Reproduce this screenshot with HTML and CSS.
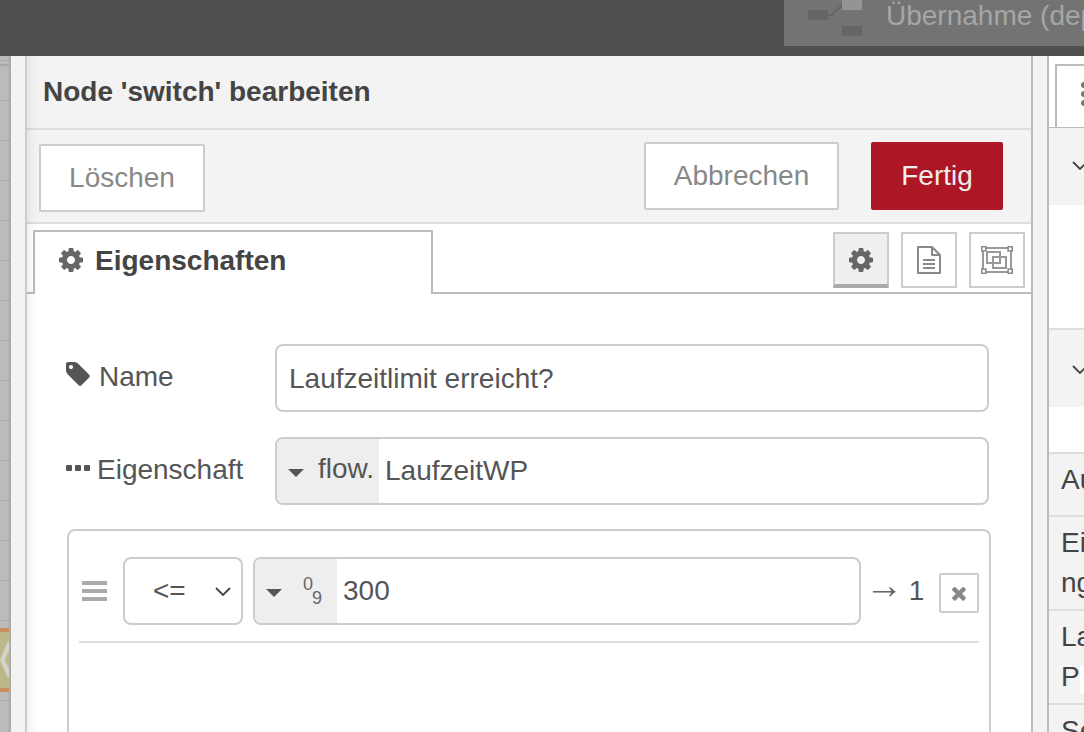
FILE: index.html
```html
<!DOCTYPE html>
<html lang="de">
<head>
<meta charset="utf-8">
<title>Node 'switch' bearbeiten</title>
<link rel="stylesheet" href="styles.css">
</head>
<body>
<header class="topbar">
  <div class="deploy">
    <svg class="deploy-icon" viewBox="0 0 54 36" width="54" height="36"><rect x="0" y="10" width="20" height="10" fill="#666"/><path d="M20 15h4l10-10" fill="none" stroke="#666" stroke-width="2"/><rect x="34" y="0" width="20" height="10" fill="#949494"/><rect x="34" y="26" width="20" height="10" fill="#666"/></svg>
    <span class="deploy-label">Übernahme (dep</span>
  </div>
</header>
<main class="main">
  <div class="canvas">
    <div class="canvas-tabs"></div>
    <div class="canvas-node"><svg viewBox="0 0 9 56" width="9" height="56"><path d="M10 10L2.500 28l7.500 17" fill="none" stroke="#d4d4cc" stroke-width="4.500"/></svg></div>
  </div>
  <div class="strip"></div>
  <section class="tray">
    <div class="tray-title">Node 'switch' bearbeiten</div>
    <div class="toolbar">
      <button class="btn btn-delete">Löschen</button>
      <button class="btn btn-cancel">Abbrechen</button>
      <button class="btn btn-done">Fertig</button>
    </div>
    <div class="tabbar">
      <div class="tab">
        <svg class="tab-gear" viewBox="0 0 1792 1792"><path d="M1152 896q0-106-75-181t-181-75-181 75-75 181 75 181 181 75 181-75 75-181zm512-109v222q0 12-8 23t-20 13l-185 28q-19 54-39 91 35 50 107 138 10 12 10 25t-9 23q-27 37-99 108t-94 71q-12 0-26-9l-138-108q-44 23-91 38-16 136-29 186-7 28-36 28h-222q-14 0-24.500-8.500t-11.500-21.500l-28-184q-49-16-90-37l-141 107q-10 9-25 9-14 0-25-11-126-114-165-168-7-10-7-23 0-12 8-23 15-21 51-66.500t54-70.500q-27-50-41-99l-183-27q-13-2-21-12.500t-8-23.500v-222q0-12 8-23t19-13l186-28q14-46 39-92-40-57-107-138-10-12-10-24 0-10 9-23 26-36 98.500-107.500t94.500-71.500q13 0 26 10l138 107q44-23 91-38 16-136 29-186 7-28 36-28h222q14 0 24.500 8.500t11.500 21.500l28 184q49 16 90 37l142-107q9-9 24-9 13 0 25 10 129 119 165 170 7 8 7 22 0 12-8 23-15 21-51 66.500t-54 70.500q26 50 41 98l183 28q13 2 21 12.500t8 23.500z"/></svg>
        <span class="tab-label">Eigenschaften</span>
      </div>
      <div class="tab-tools">
        <div class="tool tool-active"><svg class="tool-gear" viewBox="0 0 1792 1792"><path d="M1152 896q0-106-75-181t-181-75-181 75-75 181 75 181 181 75 181-75 75-181zm512-109v222q0 12-8 23t-20 13l-185 28q-19 54-39 91 35 50 107 138 10 12 10 25t-9 23q-27 37-99 108t-94 71q-12 0-26-9l-138-108q-44 23-91 38-16 136-29 186-7 28-36 28h-222q-14 0-24.500-8.500t-11.500-21.500l-28-184q-49-16-90-37l-141 107q-10 9-25 9-14 0-25-11-126-114-165-168-7-10-7-23 0-12 8-23 15-21 51-66.500t54-70.500q-27-50-41-99l-183-27q-13-2-21-12.500t-8-23.500v-222q0-12 8-23t19-13l186-28q14-46 39-92-40-57-107-138-10-12-10-24 0-10 9-23 26-36 98.500-107.500t94.500-71.500q13 0 26 10l138 107q44-23 91-38 16-136 29-186 7-28 36-28h222q14 0 24.500 8.500t11.500 21.500l28 184q49 16 90 37l142-107q9-9 24-9 13 0 25 10 129 119 165 170 7 8 7 22 0 12-8 23-15 21-51 66.500t-54 70.500q26 50 41 98l183 28q13 2 21 12.500t8 23.500z"/></svg></div>
        <div class="tool"><svg viewBox="0 0 24 28" width="24" height="28"><path d="M1 1h14l8 8v18H1z M15 1v8h8" fill="none" stroke="#888" stroke-width="2" stroke-linejoin="round"/><path d="M6 14h12M6 18h12M6 22h12" stroke="#888" stroke-width="2"/></svg></div>
        <div class="tool"><svg viewBox="0 0 32 28" width="32" height="28"><g fill="none" stroke="#999" stroke-width="2"><rect x="2" y="2" width="28" height="24"/><rect x="6" y="6" width="13" height="11"/><rect x="12" y="11" width="13" height="11"/></g><g fill="#fff" stroke="#888" stroke-width="1.500"><rect x=".7" y=".7" width="4.200" height="4.200"/><rect x="27.100" y=".7" width="4.200" height="4.200"/><rect x=".7" y="23.100" width="4.200" height="4.200"/><rect x="27.100" y="23.100" width="4.200" height="4.200"/></g></svg></div>
      </div>
    </div>
    <div class="form">
      <div class="form-row">
        <label class="form-label">
          <svg class="icon-tag" viewBox="128 128 1530 1530"><path d="M576 448q0-53-37.500-90.500t-90.500-37.500-90.500 37.500-37.500 90.500 37.500 90.500 90.500 37.500 90.500-37.500 37.500-90.500zm1067 576q0 53-37 90l-491 492q-39 37-91 37-53 0-90-37l-715-716q-38-37-64.500-101t-26.500-117v-416q0-52 38-90t90-38h416q53 0 117 26.500t102 64.500l715 714q37 39 37 91z"/></svg>
          <span class="label-name">Name</span>
        </label>
        <div class="field field-text">Laufzeitlimit erreicht?</div>
      </div>
      <div class="form-row">
        <label class="form-label">
          <span class="dots"><i></i><i></i><i></i></span>
          <span class="label-prop">Eigenschaft</span>
        </label>
        <div class="field typed">
          <div class="type-sel type-flow"><span class="caret"></span><span class="type-name">flow.</span></div>
          <span class="typed-value">LaufzeitWP</span>
        </div>
      </div>
      <div class="rules">
        <div class="rule">
          <div class="handle"><i></i><i></i><i></i></div>
          <div class="select">
            <span>&lt;=</span>
            <svg viewBox="0 0 16 9" width="16" height="9"><path d="M1 1l7 7 7-7" fill="none" stroke="#444" stroke-width="1.800"/></svg>
          </div>
          <div class="field typed typed-num">
            <div class="type-sel type-num"><span class="caret"></span><span class="num-icon"><sup>0</sup><sub>9</sub></span></div>
            <span class="typed-value typed-value-num">300</span>
          </div>
          <span class="output"><span class="output-arrow">→</span> 1</span>
          <div class="remove"><svg viewBox="300 300 1200 1260"><path d="M1490 1322q0 40-28 68l-136 136q-28 28-68 28t-68-28l-294-294-294 294q-28 28-68 28t-68-28l-136-136q-28-28-28-68t28-68l294-294-294-294q-28-28-28-68t28-68l136-136q28-28 68-28t68 28l294 294 294-294q28-28 68-28t68 28l136 136q28 28 28 68t-28 68l-294 294 294 294q28 28 28 68z"/></svg></div>
        </div>
        <div class="rule-divider"></div>
      </div>
    </div>
  </section>
  <div class="strip"></div>
  <aside class="sidebar">
    <div class="side-tabs"><div class="side-tab"><span class="side-tab-icon"><i></i><i></i><i></i></span></div></div>
    <div class="side-head"><svg viewBox="0 0 16 9" width="16" height="9"><path d="M1 1l7 7 7-7" fill="none" stroke="#444" stroke-width="1.800"/></svg></div>
    <div class="side-blank side-blank-a"></div>
    <div class="side-head side-head-b"><svg viewBox="0 0 16 9" width="16" height="9"><path d="M1 1l7 7 7-7" fill="none" stroke="#444" stroke-width="1.800"/></svg></div>
    <div class="side-blank side-blank-b"></div>
    <div class="side-row side-row-short">Au</div>
    <div class="side-row">Ei<br>ng</div>
    <div class="side-row">La<br>P<span class="chip"></span></div>
    <div class="side-row">Se</div>
  </aside>
</main>
</body>
</html>
```
FILE: styles.css
```css
* { box-sizing: border-box; }
html, body { margin: 0; height: 732px; overflow: hidden; }
body {
  display: flex;
  flex-direction: column;
  font-family: "Liberation Sans", Arial, sans-serif;
  font-size: 28px;
  color: #555;
  background: #fff;
}

/* top bar */
.topbar {
  height: 56px;
  flex: none;
  display: flex;
  justify-content: flex-end;
  align-items: flex-start;
  background: #505050;
}
.deploy {
  width: 300px;
  height: 46px;
  padding-left: 24px;
  display: flex;
  align-items: flex-start;
  background: #737373;
  overflow: hidden;
  white-space: nowrap;
}
.deploy-icon { flex: none; }
.deploy-label {
  margin-left: 24px;
  line-height: 32px;
  color: #a6a6a6;
}

/* main row */
.main { flex: 1; display: flex; min-height: 0; overflow: hidden; }
.canvas {
  position: relative;
  width: 11px;
  flex: none;
  background-color: #bbb;
  background-image:
    linear-gradient(to right, rgba(0,0,0,0) 60%, rgba(0,0,0,.1)),
    linear-gradient(to bottom, #adadad 1px, rgba(0,0,0,0) 1px);
  background-size: 100% 100%, 100% 40px;
  background-position: 0 0, 0 4px;
}
.canvas-tabs { height: 2px; margin-top: 8px; background: #a8a8a8; }
.canvas-node {
  position: absolute;
  left: 0;
  top: 572px;
  width: 9px;
  height: 64px;
  background: #bdb88a;
  border-top: 4px solid #d08f5a;
  border-bottom: 4px solid #d08f5a;
}
.canvas-node svg { display: block; }
.strip { width: 14px; flex: none; background: #f3f3f3; }

/* tray */
.tray {
  position: relative;
  width: 1008px;
  flex: none;
  display: flex;
  flex-direction: column;
  background: #fff;
  border-left: 2px solid #ccc;
  border-right: 2px solid #bbb;
}
.tray::after {
  content: "";
  position: absolute;
  left: 0;
  top: 0;
  bottom: 0;
  width: 10px;
  background: linear-gradient(to right, rgba(0,0,0,.05), rgba(0,0,0,0));
  pointer-events: none;
}
.tray-title {
  height: 74px;
  flex: none;
  padding: 16px 0 0 16px;
  line-height: 40px;
  font-weight: 700;
  color: #444;
  background: #f3f3f3;
  border-bottom: 2px solid #ddd;
}
.toolbar {
  height: 94px;
  flex: none;
  display: flex;
  align-items: flex-start;
  padding: 12px 28px 0 12px;
  background: #f3f3f3;
  border-bottom: 2px solid #ddd;
}
.btn {
  height: 68px;
  padding: 0;
  font: inherit;
  border: 2px solid #ccc;
  border-radius: 2px;
  background: #fff;
  color: #888;
}
.btn-delete { width: 166px; margin-top: 2px; }
.btn-cancel { width: 195px; margin-left: auto; }
.btn-done {
  width: 132px;
  margin-left: 32px;
  background: #ad1625;
  border-color: #ad1625;
  color: #eee;
}

/* tabs */
.tabbar {
  height: 70px;
  flex: none;
  display: flex;
  padding: 0 6px;
  border-bottom: 2px solid #bbb;
}
.tab {
  width: 400px;
  height: 64px;
  margin-top: 6px;
  padding: 0 0 6px 24px;
  display: flex;
  align-items: center;
  font-weight: 700;
  color: #444;
  background: #fff;
  border: 2px solid #bbb;
  border-bottom: 0;
  border-top-left-radius: 2px;
  border-top-right-radius: 2px;
}
.tab-gear { width: 28px; height: 28px; margin-right: 10px; margin-left: -2px; fill: #666; }
.tab-label { padding-top: 2px; }
.tab-tools { margin-left: auto; padding-top: 8px; display: flex; gap: 12px; align-items: flex-start; }
.tool {
  width: 56px;
  height: 56px;
  display: flex;
  align-items: center;
  justify-content: center;
  background: #fff;
  border: 2px solid #ccc;
}
.tool-active { background: #efefef; border-bottom: 4px solid #aaa; padding-top: 2px; }
.tool-gear { width: 28px; height: 28px; fill: #666; }

/* form */
.form { padding: 50px 0 0 40px; display: flex; flex-direction: column; flex: 1; min-height: 0; }
.form-row { display: flex; margin-bottom: 25px; }
.form-row + .form-row { margin-bottom: 24px; }
.form-label {
  width: 208px;
  flex: none;
  display: flex;
  align-items: center;
  height: 66px;
}
.icon-tag { width: 24px; height: 24px; fill: #555; margin-left: -1px; margin-top: -7px; }
.label-name { margin-left: 9px; }
.label-prop { margin-left: 7px; }
.dots { display: flex; gap: 3px; margin-left: -1px; margin-top: -4px; }
.dots i { width: 6px; height: 6px; border-radius: 1px; background: #555; }
.field {
  width: 714px;
  height: 68px;
  border: 2px solid #ccc;
  border-radius: 8px;
  background: #fff;
  overflow: hidden;
  white-space: nowrap;
}
.field-text { padding-left: 12px; line-height: 66px; }
.typed { display: flex; align-items: center; }
.type-sel {
  height: 100%;
  flex: none;
  display: flex;
  align-items: center;
  background: #eee;
}
.type-flow { width: 102px; padding-left: 11px; }
.type-num { width: 82px; padding-left: 11px; }
.caret {
  width: 0;
  height: 0;
  flex: none;
  border-left: 8px solid transparent;
  border-right: 8px solid transparent;
  border-top: 8px solid #555;
  margin-top: 4px;
}
.type-name { margin-left: 14px; padding-bottom: 4px; }
.typed-value { margin-left: 6px; }
.num-icon {
  margin-left: 21px;
  display: flex;
  font-size: 18px;
  line-height: 18px;
  color: #666;
}
.num-icon sup { position: relative; top: -7px; vertical-align: baseline; font-size: inherit; }
.num-icon sub { position: relative; top: 7px; margin-left: -1px; vertical-align: baseline; font-size: inherit; }

/* rules box */
.rules {
  width: 924px;
  height: 260px;
  flex: none;
  padding: 26px 10px 0;
  border: 2px solid #ccc;
  border-radius: 8px;
}
.rule { display: flex; align-items: center; }
.handle {
  width: 25px;
  flex: none;
  margin-left: 3px;
  display: flex;
  flex-direction: column;
  gap: 4px;
}
.handle i { height: 4px; background: #aaa; }
.select {
  width: 120px;
  height: 68px;
  flex: none;
  margin-left: 16px;
  padding: 0 10px 0 28px;
  display: flex;
  align-items: center;
  justify-content: space-between;
  border: 2px solid #ccc;
  border-radius: 8px;
  background: #fff;
}
.typed-num { width: 608px; flex: none; margin-left: 10px; }
.typed-value-num { margin-left: 6px; }
.output { width: 68px; flex: none; margin-left: 10px; white-space: nowrap; line-height: 32px; }
.output-arrow { font-size: 38px; line-height: 20px; vertical-align: 2px; margin: 0 -2px 0 -6px; color: #666; }
.remove {
  width: 40px;
  height: 40px;
  flex: none;
  margin-top: 4px;
  display: flex;
  align-items: center;
  justify-content: center;
  border: 2px solid #ccc;
  border-radius: 2px;
}
.remove svg { width: 14px; height: 15px; fill: #888; }
.rule-divider { height: 2px; margin-top: 16px; background: #ddd; }

/* sidebar */
.sidebar {
  width: 37px;
  flex: none;
  display: flex;
  flex-direction: column;
  border-left: 2px solid #bbb;
  background: #fff;
  overflow: hidden;
}
.side-tabs { height: 72px; flex: none; padding: 8px 0 0 6px; box-shadow: inset 0 -1px 0 #bbb; }
.side-tab {
  width: 60px;
  height: 63px;
  padding: 16px 0 0 24px;
  border: 2px solid #bbb;
  border-bottom: 0;
  background: #fff;
}
.side-tab-icon { display: flex; flex-direction: column; gap: 3px; }
.side-tab-icon i { width: 10px; height: 6px; border-radius: 3px; background: #777; }
.side-head {
  height: 77px;
  flex: none;
  padding: 33px 0 0 23px;
  background: #f3f3f3;
}
.side-head svg { display: block; }
.side-head-b { height: 79px; padding-top: 35px; border-top: 2px solid #ddd; }
.side-blank-a { height: 123px; flex: none; }
.side-blank-b { height: 45px; flex: none; }
.side-row {
  height: 94px;
  flex: none;
  padding: 6px 0 0 12px;
  line-height: 40px;
  white-space: nowrap;
  color: #444;
  background: #f3f3f3;
  border-top: 2px solid #ddd;
}
.side-row-short { height: 63px; }
.chip { display: inline-block; width: 20px; height: 28px; margin-left: 0; vertical-align: middle; background: #fff; }
```
